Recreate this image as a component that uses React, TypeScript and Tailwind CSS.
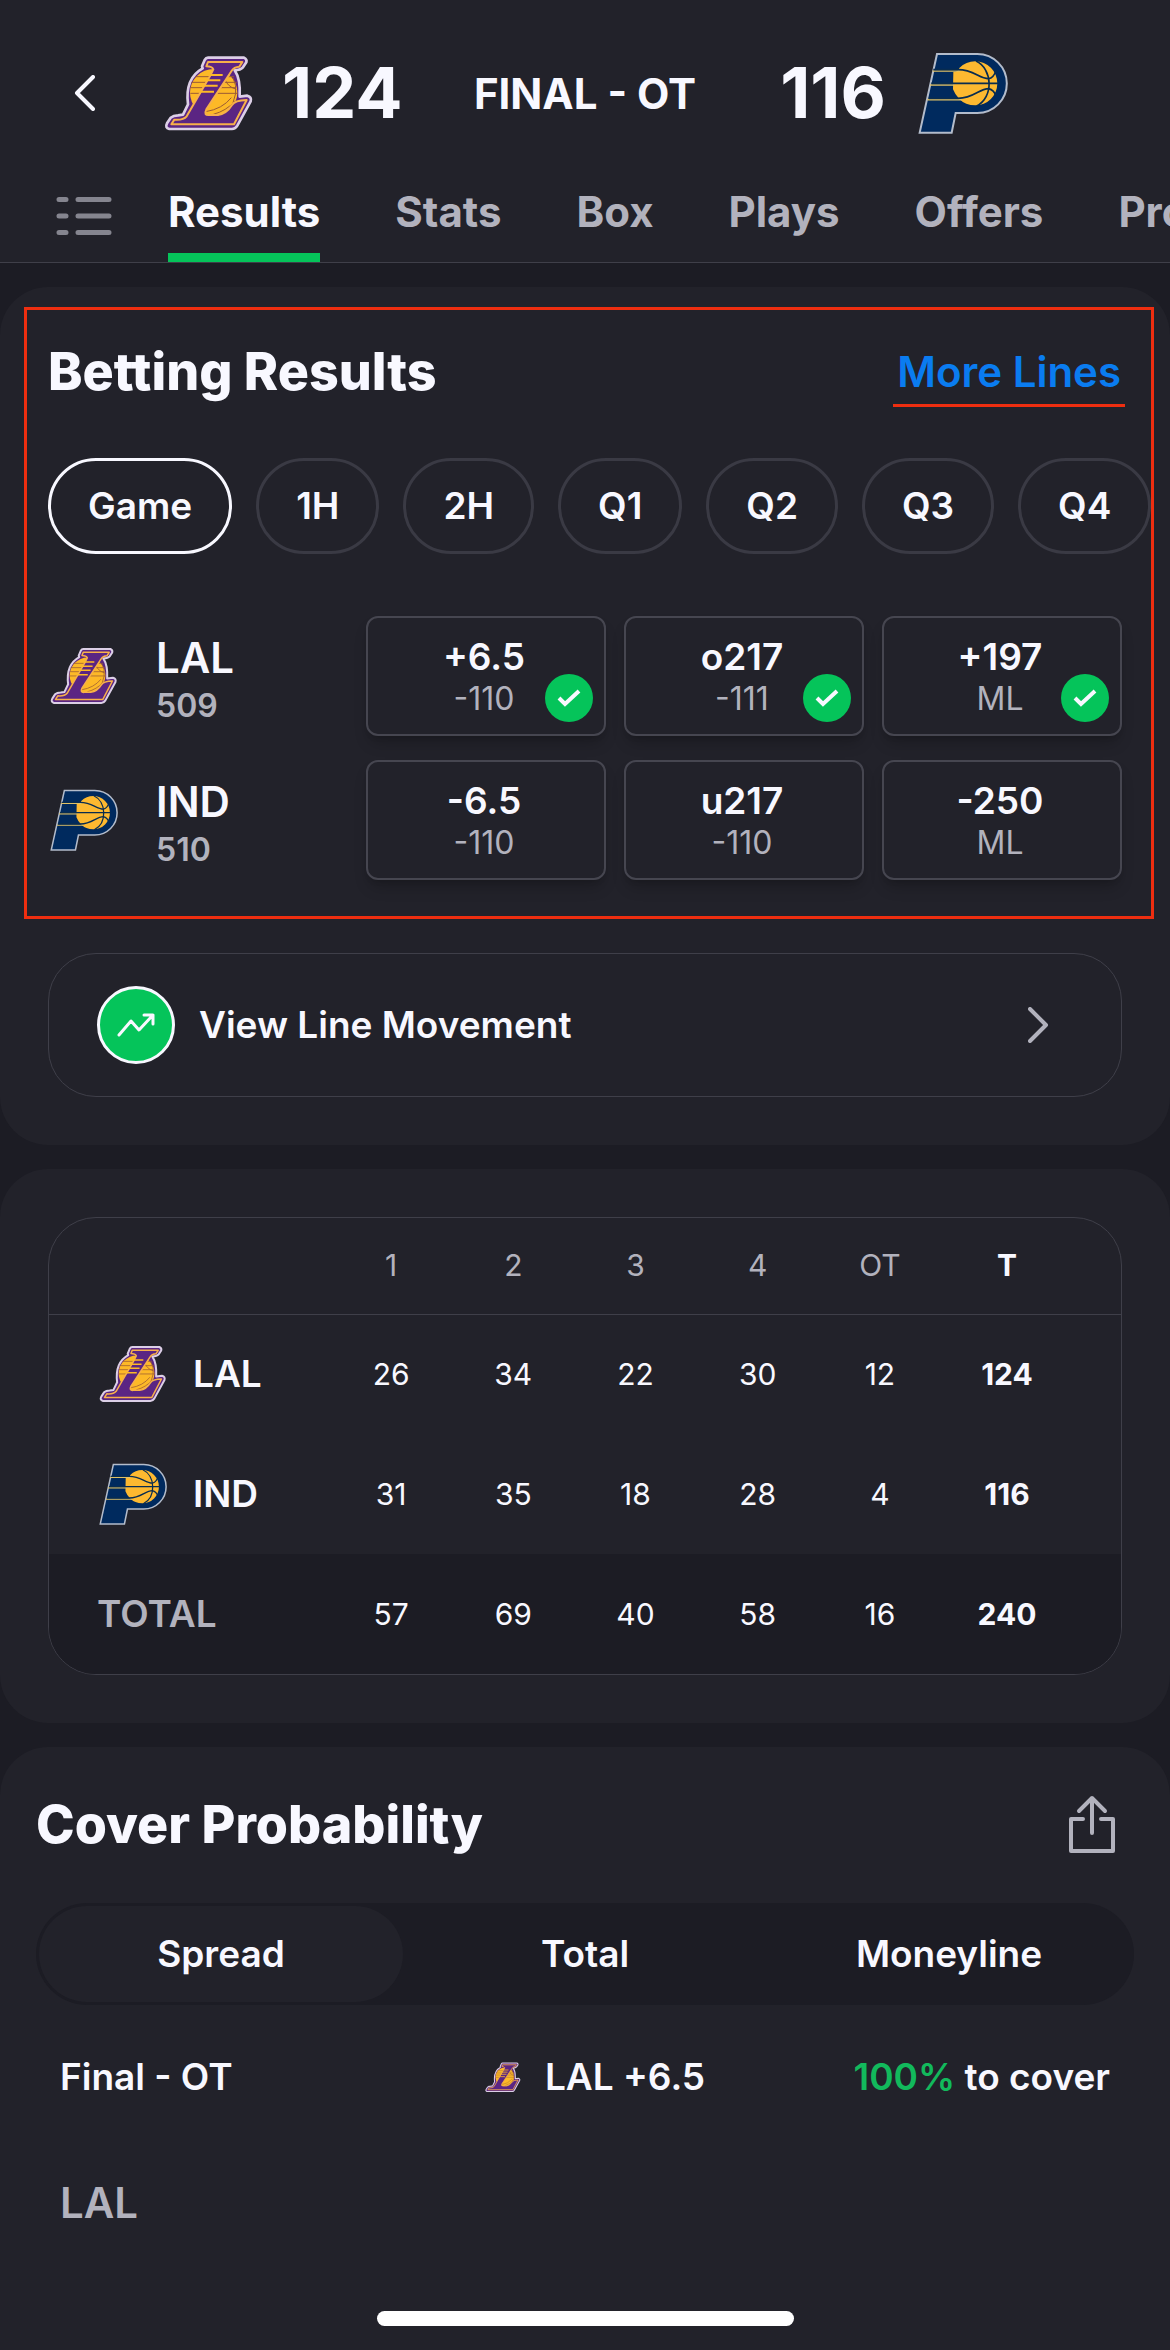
import React, { useState } from "react";

type Team = "LAL" | "IND";

type Line = {
  value: string;
  price: string;
  won: boolean;
};

type BettingRow = {
  team: Team;
  rotation: string;
  lines: Line[];
};

const tabs = ["Results", "Stats", "Box", "Plays", "Offers", "Props"];
const periods = ["Game", "1H", "2H", "Q1", "Q2", "Q3", "Q4"];
const markets = ["Spread", "Total", "Moneyline"];
const quarters = ["1", "2", "3", "4", "OT"];

const bettingRows: BettingRow[] = [
  {
    team: "LAL",
    rotation: "509",
    lines: [
      { value: "+6.5", price: "-110", won: true },
      { value: "o217", price: "-111", won: true },
      { value: "+197", price: "ML", won: true },
    ],
  },
  {
    team: "IND",
    rotation: "510",
    lines: [
      { value: "-6.5", price: "-110", won: false },
      { value: "u217", price: "-110", won: false },
      { value: "-250", price: "ML", won: false },
    ],
  },
];

const boxScore: { team: Team; points: number[]; total: number }[] = [
  { team: "LAL", points: [26, 34, 22, 30, 12], total: 124 },
  { team: "IND", points: [31, 35, 18, 28, 4], total: 116 },
];

const totals = [57, 69, 40, 58, 16];

const LakersLogo = ({ className }: { className: string }) => (
  <svg viewBox="40 48 270 230" className={className} aria-hidden="true">
    {/* silhouette */}
    <path
      d="M172 56H280Q290 61 287 70L277 85Q270 93 252 94Q270 120 267 173L290 170Q304 174 300 187L260 260Q254 270 244 270H56Q42 266 49 253L60 236Q68 229 82 229L97 227L112 196Q102 118 156 88L154 82L162 63Q166 56 172 56Z"
      fill="#5b2583"
      stroke="#dccfe6"
      strokeWidth="8"
      strokeLinejoin="round"
    />
    <circle cx="189" cy="161" r="71" fill="#fdb927" />
    <g fill="none" stroke="#9a5a35" strokeWidth="3">
      <path d="M133 113H250M122 130H258M119 146H256M119 163H262" />
      <path d="M222 118Q228 142 257 151M247 116Q270 160 232 220M165 218Q215 210 242 176M188 226Q226 216 254 186" />
    </g>
    <path
      d="M172 69H275L266 83Q250 84 243 95L167 211Q158 230 176 228H202Q228 224 244 198Q252 184 288 183L250 256H62L71 242Q98 244 108 232L178 111L188 91Q184 82 167 82Z"
      fill="#5b2583"
      stroke="#f7b04a"
      strokeWidth="6"
      strokeLinejoin="round"
    />
    <path d="M173 108H216M163 124H209M155 140H201M147 158H190" stroke="#fdb927" strokeWidth="6" />
  </svg>
);

const PacersLogo = ({ className }: { className: string }) => (
  <svg viewBox="52 38 270 248" className={className} aria-hidden="true">
    <path
      d="M109 44H230A88 88 0 0 1 230 221H165L153 280H57Z"
      fill="#002a5e"
      stroke="#b3bccb"
      strokeWidth="6"
    />
    <path
      d="M158 98Q175 96 176 86Q196 66 224 66A66 66 0 0 1 224 198Q194 198 176 179Q163 166 157 150Z"
      fill="#fdb930"
    />
    <path d="M96 95H178M88 137H160M80 181H184" stroke="#dfc166" strokeWidth="5" fill="none" />
    <g fill="none" stroke="#082c50" strokeWidth="5">
      <path d="M98 91H172C220 91 235 118 264 118Q278 116 286 94" />
      <path d="M92 132H293" />
      <path d="M84 177H172C220 177 235 148 264 148Q280 152 286 170" />
      <path d="M226 65C276 88 280 174 228 200" />
    </g>
  </svg>
);

const TeamLogo = ({ team, className }: { team: Team; className: string }) =>
  team === "LAL" ? <LakersLogo className={className} /> : <PacersLogo className={className} />;

const Chevron = ({ className }: { className: string }) => (
  <svg viewBox="0 0 21 36" className={className} fill="none" stroke="currentColor" strokeWidth="4" strokeLinecap="round" strokeLinejoin="round" aria-hidden="true">
    <path d="M2 2L18 18L2 34" />
  </svg>
);

const OddsButton = ({ line }: { line: Line }) => (
  <button className="relative flex h-[120px] flex-col items-center justify-center rounded-xl border-2 border-[#464650] bg-[#22222a] pt-1 pr-1 shadow-lg shadow-black/20">
    <span className="text-[37px] leading-[42px] font-semibold">{line.value}</span>
    <span className="text-[32px] leading-[42px] text-[#b2b2bd]">{line.price}</span>
    {line.won && (
      <span className="absolute right-[11px] bottom-3 flex size-12 items-center justify-center rounded-full bg-[#05c45a]">
        <svg viewBox="0 0 24 18" className="w-6" fill="none" stroke="#f8f8ff" strokeWidth="4" aria-hidden="true">
          <path d="M2 9L8 15L22 2" />
        </svg>
      </span>
    )}
  </button>
);

const Header = () => {
  const [tab, setTab] = useState("Results");

  return (
    <header className="border-b border-[#3f3f49] bg-[#22222a]">
      <div className="grid h-[186px] grid-cols-[1fr_auto_1fr] items-center">
        <div className="flex items-center pl-[74px]">
          <button aria-label="Back">
            <Chevron className="w-[21px] rotate-180" />
          </button>
          <LakersLogo className="ml-[69px] w-[90px]" />
          <span className="ml-7 text-[70px] leading-none font-bold">124</span>
        </div>
        <span className="text-[42px] font-bold">FINAL - OT</span>
        <div className="flex items-center justify-end pr-[162px]">
          <span className="mr-8 text-[70px] leading-none font-bold">116</span>
          <PacersLogo className="w-[90px]" />
        </div>
      </div>
      <nav className="flex h-[76px] overflow-hidden pl-14">
        <button aria-label="All sections" className="mr-14 h-[60px] shrink-0">
          <svg viewBox="0 0 56 40" className="w-14" stroke="#85858f" strokeWidth="5" strokeLinecap="round" aria-hidden="true">
            <path d="M3 3.500H10M22 3.500H53M3 20H10M22 20H53M3 36.500H10M22 36.500H53" />
          </svg>
        </button>
        <div className="flex gap-[75px]">
          {tabs.map((name) => (
            <button
              key={name}
              onClick={() => setTab(name)}
              className={
                name === tab
                  ? "border-b-[9px] border-[#05c45a] pb-4 text-[42px] leading-[50px] font-bold"
                  : "border-b-[9px] border-transparent pb-4 text-[42px] leading-[50px] font-bold text-[#b2b2bd]"
              }
            >
              {name}
            </button>
          ))}
        </div>
      </nav>
    </header>
  );
};

const BettingResults = () => {
  const [period, setPeriod] = useState("Game");

  return (
    <section className="rounded-[48px] bg-[#22222a] pt-5 pb-12">
      <div className="mr-4 ml-6 border-[3px] border-[#ee2e10] pt-9 pb-9 pl-[21px]">
        <div className="flex items-start justify-between pr-[26px]">
          <h2 className="text-[52px] leading-[52px] font-extrabold">Betting Results</h2>
          <a href="#lines" className="border-b-[3px] border-[#ee2e10] px-1 pb-[6px] text-[42px] leading-[52px] font-semibold text-[#0a7cf0]">
            More Lines
          </a>
        </div>
        <div className="mt-[51px] flex gap-6 overflow-hidden">
          {periods.map((name) => (
            <button
              key={name}
              onClick={() => setPeriod(name)}
              className={
                name === period
                  ? "h-24 shrink-0 rounded-full border-[3px] border-[#f8f8ff] px-[37px] text-[37px] font-semibold"
                  : "h-24 shrink-0 rounded-full border-[3px] border-[#3a3a44] px-[37px] text-[37px] font-semibold"
              }
            >
              {name}
            </button>
          ))}
        </div>
        <div className="mt-[62px] flex flex-col gap-6 pr-[29px]">
          {bettingRows.map((row) => (
            <div key={row.team} className="grid grid-cols-[300px_1fr_1fr_1fr] items-center gap-[18px]">
              <div className="flex items-center">
                <TeamLogo team={row.team} className="ml-[2px] w-[68px]" />
                <div className="ml-[38px] flex flex-col pt-3">
                  <span className="text-[42px] leading-[48px] font-semibold">{row.team}</span>
                  <span className="text-[32px] leading-[48px] font-semibold text-[#b2b2bd]">{row.rotation}</span>
                </div>
              </div>
              {row.lines.map((line) => (
                <OddsButton key={line.value} line={line} />
              ))}
            </div>
          ))}
        </div>
      </div>
      <button className="mx-12 mt-[34px] flex h-[144px] w-[calc(100%-96px)] items-center rounded-[48px] border border-[#3f3f49] pr-[72px] pl-12">
        <span className="flex size-[78px] items-center justify-center rounded-full border-[3px] border-[#f8f8ff] bg-[#05c45a]">
          <svg viewBox="0 0 38 24" className="w-[38px]" fill="none" stroke="#f8f8ff" strokeWidth="3" strokeLinecap="round" strokeLinejoin="round" aria-hidden="true">
            <path d="M2 22L14 8L22 17L36 2M27 2H36V11" />
          </svg>
        </span>
        <span className="ml-6 text-[37px] font-semibold">View Line Movement</span>
        <Chevron className="ml-auto w-[21px] text-[#b2b2bd]" />
      </button>
    </section>
  );
};

const BoxScore = () => (
  <section className="rounded-[48px] bg-[#22222a] p-12">
    <div className="overflow-hidden rounded-[48px] border border-[#3f3f49]">
      <table className="w-full table-fixed text-center text-[30px]">
        <colgroup>
          <col className="w-[281px]" />
          <col />
          <col />
          <col />
          <col />
          <col />
          <col className="w-[180px]" />
        </colgroup>
        <thead>
          <tr className="h-24 border-b border-[#3f3f49] text-[#b2b2bd]">
            <td />
            {quarters.map((name) => (
              <th key={name} scope="col" className="font-normal">
                {name}
              </th>
            ))}
            <th scope="col" className="pr-12 font-bold text-[#f8f8ff]">
              T
            </th>
          </tr>
        </thead>
        <tbody>
          {boxScore.map((row) => (
            <tr key={row.team} className="h-[120px]">
              <th scope="row" className="pl-[50px] text-[37px] font-semibold">
                <span className="flex items-center gap-[26px]">
                  <TeamLogo team={row.team} className="w-[68px]" />
                  {row.team}
                </span>
              </th>
              {row.points.map((points, i) => (
                <td key={i}>{points}</td>
              ))}
              <td className="pr-12 font-bold">{row.total}</td>
            </tr>
          ))}
          <tr className="h-[120px] bg-[#1c1c24]">
            <th scope="row" className="pl-12 text-left text-[37px] font-semibold text-[#b2b2bd]">
              TOTAL
            </th>
            {totals.map((points, i) => (
              <td key={i}>{points}</td>
            ))}
            <td className="pr-12 font-bold">240</td>
          </tr>
        </tbody>
      </table>
    </div>
  </section>
);

const CoverProbability = () => {
  const [market, setMarket] = useState("Spread");

  return (
    <section className="flex grow flex-col rounded-t-[48px] bg-[#22222a] px-9 pt-12">
      <div className="flex items-center justify-between pr-[18px]">
        <h2 className="text-[52px] leading-[60px] font-extrabold">Cover Probability</h2>
        <button aria-label="Share">
          <svg viewBox="0 0 48 60" className="w-12" fill="none" stroke="#b2b2bd" strokeWidth="4" strokeLinecap="round" strokeLinejoin="round" aria-hidden="true">
            <path d="M15 24H3V56H45V24H33M24 38V3M11 16L24 3L37 16" />
          </svg>
        </button>
      </div>
      <div className="mt-12 flex rounded-full bg-[#1c1c24] p-[3px]">
        {markets.map((name) => (
          <button
            key={name}
            onClick={() => setMarket(name)}
            className={
              name === market
                ? "h-24 flex-1 rounded-full bg-[#22222a] text-[37px] font-semibold"
                : "h-24 flex-1 rounded-full text-[37px] font-semibold"
            }
          >
            {name}
          </button>
        ))}
      </div>
      <div className="mt-12 grid grid-cols-3 items-center px-6 text-[37px] leading-[48px] font-semibold">
        <span>Final - OT</span>
        <span className="flex items-center justify-center gap-6 pl-5">
          <LakersLogo className="w-9" />
          LAL +6.5
        </span>
        <span className="text-right whitespace-nowrap">
          <span className="text-[#12b95c]">100%</span> to cover
        </span>
      </div>
      <h3 className="mt-[75px] px-6 text-[42px] leading-[54px] font-semibold text-[#b2b2bd]">LAL</h3>
      <div className="mx-auto mt-auto mb-6 h-[15px] w-[417px] rounded-full bg-white" />
    </section>
  );
};

const App: React.FC = () => {
  return (
    <div className="flex min-h-screen flex-col bg-[#1c1c24] font-['Inter',sans-serif] text-[#f8f8ff]">
      <Header />
      <main className="mt-6 flex grow flex-col gap-6">
        <BettingResults />
        <BoxScore />
        <CoverProbability />
      </main>
    </div>
  );
};

export default App;
